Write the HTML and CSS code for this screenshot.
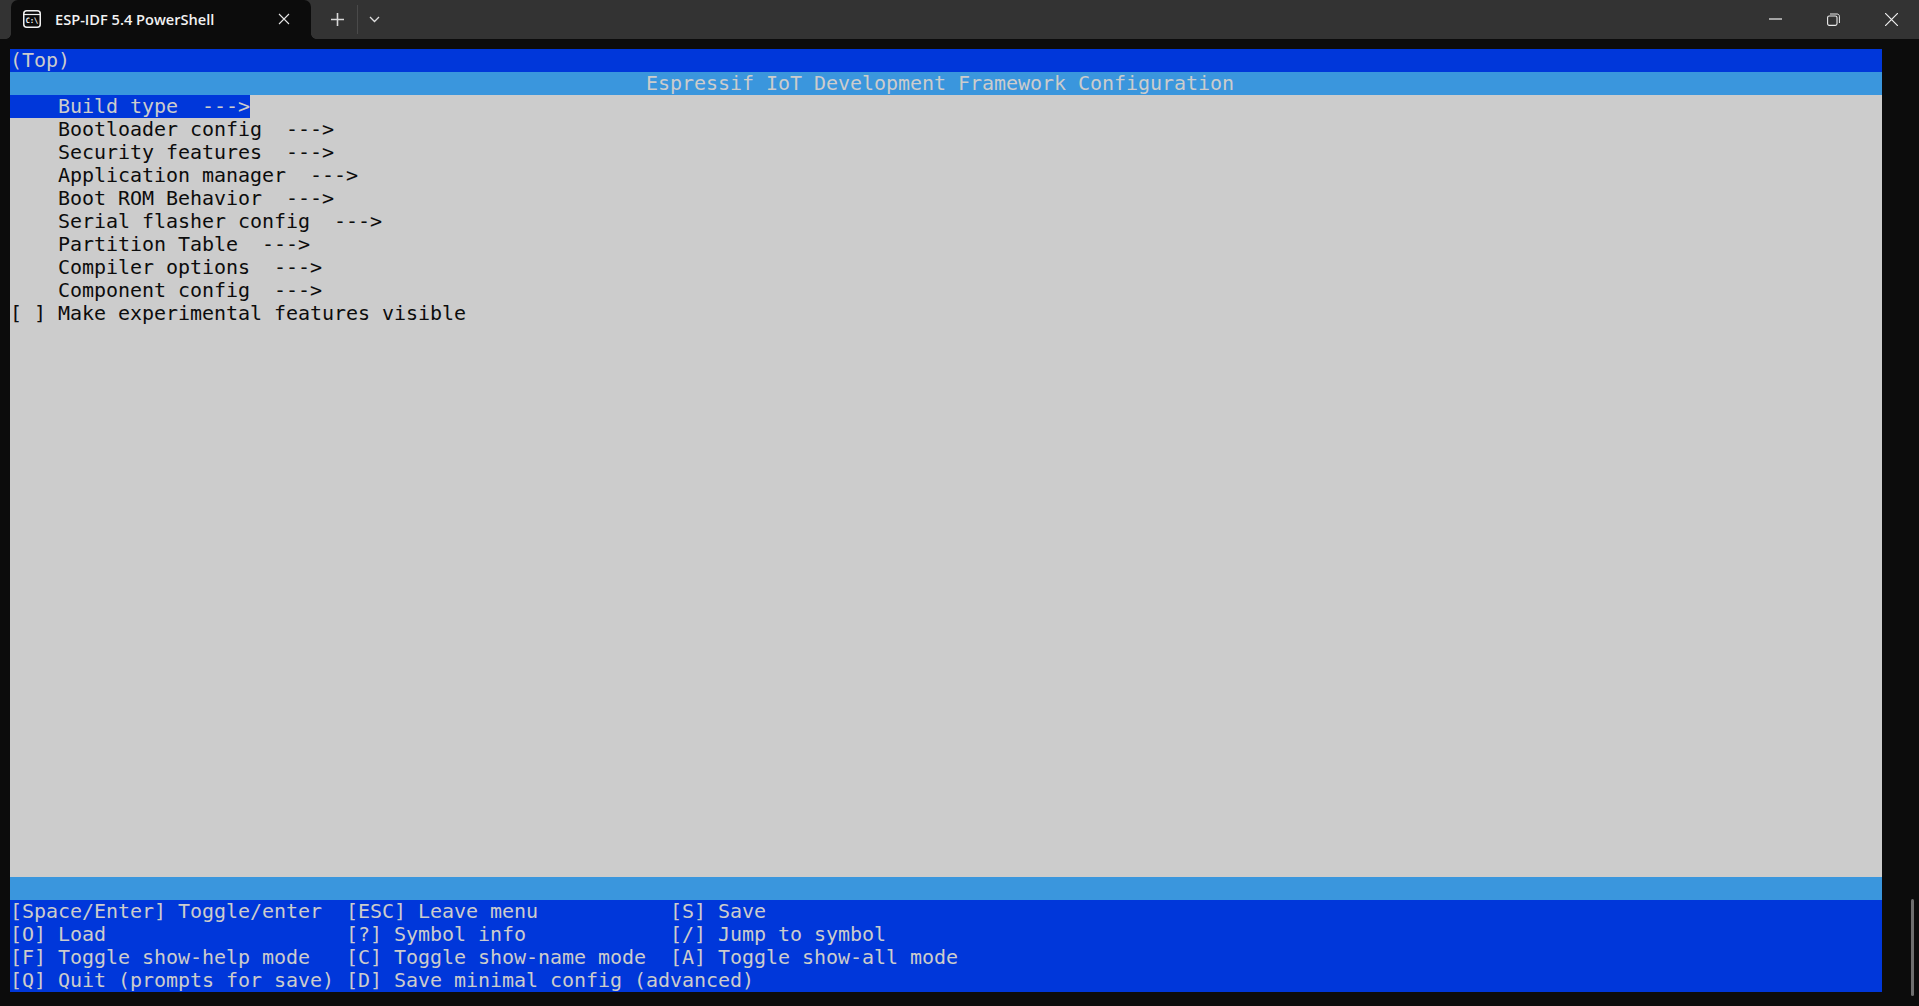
FILE: index.html
```html
<!DOCTYPE html>
<html lang="en">
<head>
<meta charset="utf-8">
<title>ESP-IDF 5.4 PowerShell</title>
<link rel="stylesheet" href="styles.css">
</head>
<body>
<div class="window">
  <header class="tabbar">
    <div class="tab">
      <svg class="tab-icon" width="18" height="18" viewBox="0 0 18 18" aria-hidden="true">
        <rect x="0.75" y="0.75" width="16.5" height="16.5" rx="3" fill="none" stroke="#f2f2f2" stroke-width="1.5"/>
        <path d="M1 4.5H17" stroke="#f2f2f2" stroke-width="1.2"/>
        <text x="2.6" y="13.4" class="tab-icon-text">C:\</text>
      </svg>
      <span class="tab-title">ESP-IDF 5.4 PowerShell</span>
      <svg class="tab-close" width="12" height="12" viewBox="0 0 12 12" aria-hidden="true">
        <path d="M1 1L11 11M11 1L1 11" stroke="#e6e6e6" stroke-width="1.1" fill="none"/>
      </svg>
    </div>
    <div class="tab-actions">
      <svg class="new-tab" width="13" height="13" viewBox="0 0 13 13" aria-hidden="true">
        <path d="M6.5 0V13M0 6.5H13" stroke="#d8d8d8" stroke-width="1.6" fill="none"/>
      </svg>
      <span class="divider"></span>
      <svg class="chevron" width="11" height="7" viewBox="0 0 11 7" aria-hidden="true">
        <path d="M1 1L5.5 5.5L10 1" stroke="#e0e0e0" stroke-width="1.3" fill="none"/>
      </svg>
    </div>
    <div class="window-controls">
      <svg class="ctl" width="13" height="13" viewBox="0 0 13 13" aria-hidden="true">
        <path d="M0 6H13" stroke="#d6d6d6" stroke-width="1.4" fill="none"/>
      </svg>
      <svg class="ctl" width="13" height="13" viewBox="0 0 13 13" aria-hidden="true">
        <rect x="0.6" y="3" width="9.4" height="9.4" rx="1.6" fill="none" stroke="#ececec" stroke-width="1.1"/>
        <path d="M3 1H10.2C11.4 1 12.4 2 12.4 3.2V10" fill="none" stroke="#ececec" stroke-width="1"/>
      </svg>
      <svg class="ctl" width="13" height="13" viewBox="0 0 13 13" aria-hidden="true">
        <path d="M0 0L13 13M13 0L0 13" stroke="#f0f0f0" stroke-width="1.2" fill="none"/>
      </svg>
    </div>
  </header>
  <main class="terminal">
    <div class="row bar-blue">(Top)</div>
    <div class="row bar-sky">                                                     Espressif IoT Development Framework Configuration</div>
    <div class="menu">
      <div class="row"><span class="selected">    Build type  ---&gt;</span></div>
      <div class="row">    Bootloader config  ---&gt;</div>
      <div class="row">    Security features  ---&gt;</div>
      <div class="row">    Application manager  ---&gt;</div>
      <div class="row">    Boot ROM Behavior  ---&gt;</div>
      <div class="row">    Serial flasher config  ---&gt;</div>
      <div class="row">    Partition Table  ---&gt;</div>
      <div class="row">    Compiler options  ---&gt;</div>
      <div class="row">    Component config  ---&gt;</div>
      <div class="row">[ ] Make experimental features visible</div>
    </div>
    <div class="row bar-sky"> </div>
    <div class="row bar-blue">[Space/Enter] Toggle/enter  [ESC] Leave menu           [S] Save</div>
    <div class="row bar-blue">[O] Load                    [?] Symbol info            [/] Jump to symbol</div>
    <div class="row bar-blue">[F] Toggle show-help mode   [C] Toggle show-name mode  [A] Toggle show-all mode</div>
    <div class="row bar-blue">[Q] Quit (prompts for save) [D] Save minimal config (advanced)</div>
  </main>
  <div class="scroll-thumb"></div>
</div>
</body>
</html>
```
FILE: styles.css
```css
* { box-sizing: border-box; }
html, body { margin: 0; height: 100%; }
body { background: #0c0c0c; overflow: hidden; }
.window { position: relative; width: 1919px; height: 1006px; display: flex; flex-direction: column; background: #0c0c0c; }
.tabbar { height: 39px; flex: none; display: flex; align-items: center; background: #333333; padding-left: 11px; }
.tab { position: relative; width: 300px; height: 39px; flex: none; display: flex; align-items: center; background: #0c0c0c; border-radius: 7px 7px 0 0; padding: 0 0 1px 12px; }
.tab::before, .tab::after { content: ""; position: absolute; bottom: 0; width: 5px; height: 5px; background: radial-gradient(circle at var(--cx) 0, #333333 4.5px, #0c0c0c 5px); }
.tab::before { left: -5px; --cx: 0; }
.tab::after { right: -5px; --cx: 100%; }
.tab-icon { flex: none; }
.tab-icon-text { font: 700 7.5px "DejaVu Sans Mono", monospace; fill: #f2f2f2; letter-spacing: -0.4px; }
.tab-title { margin-left: 14px; font: 600 14.6px/18px "Open Sans", sans-serif; color: #f2f2f2; white-space: nowrap; width: 223px; }
.tab-close { flex: none; }
.tab-actions { display: flex; align-items: center; height: 39px; padding: 0 0 1px 20px; }
.divider { width: 1px; height: 29px; background: #4a4a4a; margin: 0 11px 0 13px; }
.window-controls { margin-left: auto; display: flex; align-items: center; gap: 45px; padding-right: 21px; }
.terminal { margin: 10px 37px 0 10px; width: 1872px; display: flex; flex-direction: column; font: 20px/23px "DejaVu Sans Mono", monospace; letter-spacing: -0.04px; color: #0c0c0c; background: #cccccc; }
.row { height: 23px; white-space: pre; flex: none; }
.menu { height: 782px; flex: none; }
.bar-blue { background: #0037da; color: #cccccc; }
.bar-sky { background: #3a96dd; color: #cccccc; }
.selected { display: inline-block; width: 240px; height: 23px; background: #0037da; color: #cccccc; }
.scroll-thumb { position: absolute; left: 1911px; top: 899px; width: 3px; height: 97px; border-radius: 2px; background: #6e6e6e; }
```
